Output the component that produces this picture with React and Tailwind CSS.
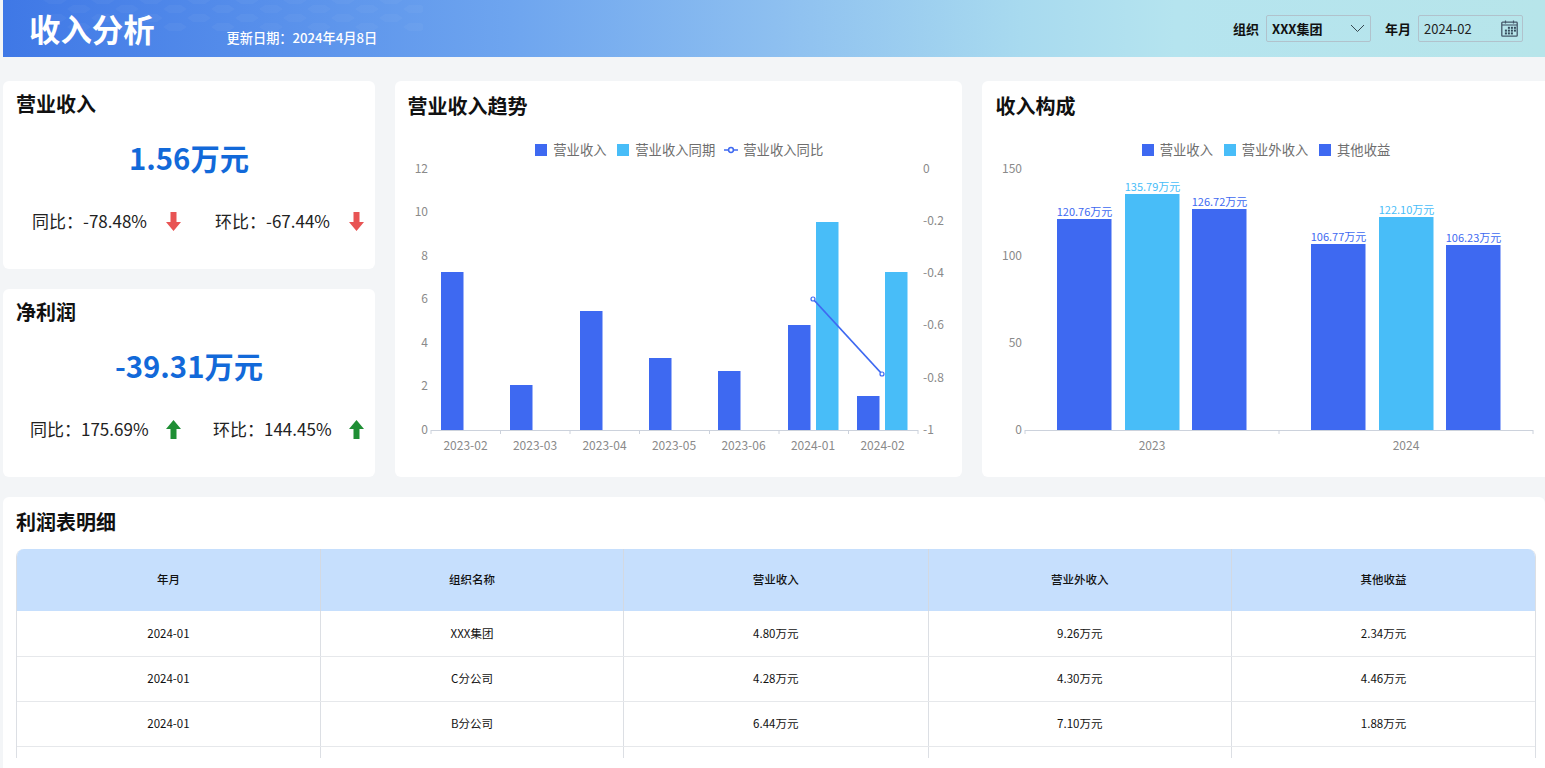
import React from "react";

const FONT = "font-['Noto_Sans_CJK_SC','Noto_Sans',sans-serif]";

function Arrow({ up }) {
  return (
    <svg width="15" height="19" viewBox="0 0 15 19" className="shrink-0">
      {up ? (
        <path d="M7.5 0 L15 9 H10.5 V19 H4.5 V9 H0 Z" fill="#1f8f35" />
      ) : (
        <path d="M7.5 19 L15 10 H10.5 V0 H4.5 V10 H0 Z" fill="#e85454" />
      )}
    </svg>
  );
}

function KpiCard({ title, value, stats, up, statsPad, textWidth }) {
  return (
    <div className="h-[188px] rounded-md bg-white pl-[13px]">
      <div className="pt-[7px] text-[20px] leading-[32px] font-bold text-[#111]">{title}</div>
      <div className="mt-[15px] pr-[13px] text-center text-[29.3px] leading-[44px] font-bold text-[#1269d9]">{value}</div>
      <div className={`mt-[30px] flex ${statsPad}`}>
        {stats.map((s, i) => (
          <div key={i} className="flex shrink-0 items-center" style={{ width: i === 0 ? 183 : 160 }}>
            <span className="shrink-0 text-[17px] leading-[24px] whitespace-nowrap text-[#222]" style={{ width: textWidth }}>{s}</span>
            <Arrow up={up} />
          </div>
        ))}
      </div>
    </div>
  );
}

function Legend({ items, className }) {
  return (
    <div className={`flex items-center justify-center text-[13.33px] leading-[20px] text-[#6e6e6e] ${className}`}>
      {items.map((it, i) => (
        <div key={it.label} className={`flex items-center ${it.line ? "ml-[9px] gap-[5px]" : "gap-[6px]"} ${!it.line && i > 0 ? "ml-[10.7px]" : ""}`}>
          {it.line ? (
            <svg width="14" height="8" viewBox="0 0 14 8">
              <path d="M0 4H14" stroke="#3e69f1" strokeWidth="1.5" />
              <circle cx="7" cy="4" r="2.4" fill="#fff" stroke="#3e69f1" strokeWidth="1.5" />
            </svg>
          ) : (
            <span className="size-[12px]" style={{ background: it.color }} />
          )}
          <span>{it.label}</span>
        </div>
      ))}
    </div>
  );
}

const axis = { fontSize: 12, fill: "#8a8a8a" };

function TrendChart() {
  const ox = 395, oy = 160;
  const left = [[441, 272], [510, 385], [580, 311], [649, 358], [718, 371], [788, 325], [857, 396]];
  const right = [[816, 222], [885, 272]];
  const months = ["2023-02", "2023-03", "2023-04", "2023-05", "2023-06", "2024-01", "2024-02"];
  const base = 430;
  const ticks = [431, 500.5, 570, 639.5, 709.5, 779, 848.5, 918];
  return (
    <svg width="567" height="310" viewBox={`${ox} ${oy} 567 310`} className="block" style={{ fontFamily: "'Noto Sans CJK SC', sans-serif" }}>
      {left.map(([x, y]) => <rect key={x} x={x} y={y} width="22.5" height={base - y} fill="#3e69f1" />)}
      {right.map(([x, y]) => <rect key={x} x={x} y={y} width="22.5" height={base - y} fill="#48bdf8" />)}
      <line x1="431" x2="918" y1="430.5" y2="430.5" stroke="#ccd2dc" />
      {ticks.map((x) => <line key={x} x1={x} x2={x} y1="430" y2="434" stroke="#ccd2dc" />)}
      {months.map((m, i) => (
        <text key={m} x={465.5 + i * 69.5} y="450" textAnchor="middle" {...axis}>{m}</text>
      ))}
      {["12", "10", "8", "6", "4", "2", "0"].map((t, i) => (
        <text key={t} x="428" y={172.8 + i * 43.5} textAnchor="end" {...axis}>{t}</text>
      ))}
      {["0", "-0.2", "-0.4", "-0.6", "-0.8", "-1"].map((t, i) => (
        <text key={t} x="923" y={172.8 + i * 52.2} {...axis}>{t}</text>
      ))}
      <line x1="813" y1="299" x2="882" y2="374" stroke="#3e69f1" strokeWidth="1.8" />
      <circle cx="813" cy="299" r="2" fill="#fff" stroke="#3e69f1" strokeWidth="1.2" />
      <circle cx="882" cy="374" r="2" fill="#fff" stroke="#3e69f1" strokeWidth="1.2" />
    </svg>
  );
}

function MixChart() {
  const ox = 982, oy = 160;
  const bars = [
    [1057, 219, "120.76万元", "#3e69f1"],
    [1125, 194, "135.79万元", "#48bdf8"],
    [1192, 209, "126.72万元", "#3e69f1"],
    [1311, 244, "106.77万元", "#3e69f1"],
    [1379, 217, "122.10万元", "#48bdf8"],
    [1446, 245, "106.23万元", "#3e69f1"],
  ];
  return (
    <svg width="563" height="310" viewBox={`${ox} ${oy} 563 310`} className="block" style={{ fontFamily: "'Noto Sans CJK SC', sans-serif" }}>
      {bars.map(([x, y, l, c]) => (
        <g key={x}>
          <rect x={x} y={y} width="54.5" height={430 - y} fill={c} />
          <text x={x + 27.5} y={y - 3} textAnchor="middle" fontSize="11" fill={c}>{l}</text>
        </g>
      ))}
      <line x1="1025" x2="1533" y1="430.5" y2="430.5" stroke="#ccd2dc" />
      {[1025, 1279, 1533].map((x) => <line key={x} x1={x} x2={x} y1="430" y2="434" stroke="#ccd2dc" />)}
      <text x="1152" y="450" textAnchor="middle" {...axis}>2023</text>
      <text x="1406" y="450" textAnchor="middle" {...axis}>2024</text>
      {["150", "100", "50", "0"].map((t, i) => (
        <text key={t} x="1022" y={172.8 + i * 87} textAnchor="end" {...axis}>{t}</text>
      ))}
    </svg>
  );
}

function CalendarIcon() {
  return (
    <svg width="17" height="17" viewBox="0 0 17 17" fill="none">
      <rect x="0.8" y="2.2" width="15.4" height="14" rx="0.8" stroke="#45586a" strokeWidth="1.3" />
      <path d="M4.5 0.5V3.5M12.5 0.5V3.5" stroke="#45586a" strokeWidth="1.2" />
      <path d="M1 5H16" stroke="#45586a" strokeWidth="1.1" />
      {[[7, 6.8], [10, 6.8], [13, 6.8], [4, 9.6], [7, 9.6], [10, 9.6], [13, 9.6], [4, 12.4], [7, 12.4], [10, 12.4]].map(([x, y]) => (
        <rect key={`${x}-${y}`} x={x - 0.1} y={y} width="2" height="2" fill="#33495a" />
      ))}
    </svg>
  );
}

const columns = ["年月", "组织名称", "营业收入", "营业外收入", "其他收益"];
const rows = [
  ["2024-01", "XXX集团", "4.80万元", "9.26万元", "2.34万元"],
  ["2024-01", "C分公司", "4.28万元", "4.30万元", "4.46万元"],
  ["2024-01", "B分公司", "6.44万元", "7.10万元", "1.88万元"],
  ["", "", "", "", ""],
];
const gridCols = "grid grid-cols-[304px_303px_304.5px_303.5px_1fr]";

export default function App() {
  return (
    <div className={`h-[768px] w-full overflow-hidden bg-[#f3f5f7] pl-[3px] ${FONT}`}>
      <header className="relative flex h-[57px] items-center overflow-hidden bg-[linear-gradient(90deg,#3f78e6_0%,#6ea5ef_33%,#8dbff0_50%,#a8daef_66%,#b5e4ef_76%,#b7e5ea_100%)]">
        <svg className="absolute top-0 left-[40px]" width="380" height="34" viewBox="0 0 380 34" fill="none" aria-hidden="true">
          {[0, 1, 2, 3].map((r) =>
            [0, 1, 2, 3, 4, 5, 6, 7].map((c) => (
              <path
                key={`${r}-${c}`}
                transform={`translate(${c * 48 + (r % 2) * 24} ${r * 9 - 4})`}
                d="M0 4 L6 0 H18 L24 4 L18 8 H6 Z"
                fill="#fff"
                fillOpacity="0.035"
              />
            ))
          )}
        </svg>
        <h1 className="relative ml-[26px] text-[31.4px] leading-[40px] font-bold whitespace-nowrap text-white">收入分析</h1>
        <span className="relative mt-[18px] ml-[72px] text-[13.2px] leading-[20px] font-medium whitespace-nowrap text-white">{"更新日期\uFF1A2024年4月8日"}</span>
        <div className="relative mr-[22px] ml-auto flex items-center text-[13px] text-[#111]">
          <span className="mr-[7px] font-bold">组织</span>
          <div className="flex h-[27px] w-[105px] items-center justify-between rounded-[2px] border border-[#b1c2cc] pr-[5px] pl-[5px] font-bold">
            <span>XXX集团</span>
            <svg width="15" height="9" viewBox="0 0 15 9" fill="none">
              <path d="M1 1L7.5 7.5L14 1" stroke="#37474f" strokeWidth="1" />
            </svg>
          </div>
          <span className="mr-[7px] ml-[14px] font-bold">年月</span>
          <div className="flex h-[27px] w-[105px] items-center justify-between rounded-[2px] border border-[#b1c2cc] pr-[4px] pl-[5px] text-[#222]">
            <span>2024-02</span>
            <CalendarIcon />
          </div>
        </div>
      </header>

      <div className="mt-[24px] flex gap-[19.5px]">
        <div className="flex w-[372px] shrink-0 flex-col gap-[20px]">
          <KpiCard title="营业收入" value="1.56万元" stats={["同比\uFF1A-78.48%", "环比\uFF1A-67.44%"]} up={false} statsPad="pl-[16px]" textWidth={134} />
          <KpiCard title="净利润" value="-39.31万元" stats={["同比\uFF1A175.69%", "环比\uFF1A144.45%"]} up statsPad="pl-[14px]" textWidth={136} />
        </div>

        <section className="h-[396px] w-[567.5px] shrink-0 rounded-md bg-white">
          <div className="pt-[9px] pl-[13px] text-[20px] leading-[32px] font-bold text-[#111]">营业收入趋势</div>
          <Legend
            className="mt-[18px] h-[20px] pl-[2px]"
            items={[
              { label: "营业收入", color: "#3e69f1" },
              { label: "营业收入同期", color: "#48bdf8" },
              { label: "营业收入同比", line: true },
            ]}
          />
          <TrendChart />
        </section>

        <section className="h-[396px] min-w-[580px] flex-1 rounded-md bg-white">
          <div className="pt-[9px] pl-[14px] text-[20px] leading-[32px] font-bold text-[#111]">收入构成</div>
          <div className="mt-[18px] flex h-[20px] w-[569px] justify-center">
            <Legend
              items={[
                { label: "营业收入", color: "#3e69f1" },
                { label: "营业外收入", color: "#48bdf8" },
                { label: "其他收益", color: "#3e69f1" },
              ]}
            />
          </div>
          <MixChart />
        </section>
      </div>

      <section className="mt-[20px] h-[271px] rounded-t-md bg-white pt-[9px] pl-[13px]">
        <div className="text-[20px] leading-[32px] font-bold text-[#111]">利润表明细</div>
        <div className="mt-[11px] h-[209px] w-[1520px] overflow-hidden rounded-t-[8px] border-x border-[#dcdfe4] text-[11.5px] text-[#111]">
          <div className={`${gridCols} h-[62px] bg-[#c6dffd] font-medium`}>
            {columns.map((c, i) => (
              <div key={c} className={`flex items-center justify-center ${i < 4 ? "border-r border-[#d3d9e2]" : ""}`}>{c}</div>
            ))}
          </div>
          {rows.map((r, i) => (
            <div key={i} className={`${gridCols} border-b border-[#e6e8eb] ${i === 0 ? "h-[46px]" : "h-[45px]"}`}>
              {r.map((c, j) => (
                <div key={j} className={`flex items-center justify-center ${j < 4 ? "border-r border-[#dcdfe4]" : ""}`}>{c}</div>
              ))}
            </div>
          ))}
        </div>
      </section>
    </div>
  );
}
